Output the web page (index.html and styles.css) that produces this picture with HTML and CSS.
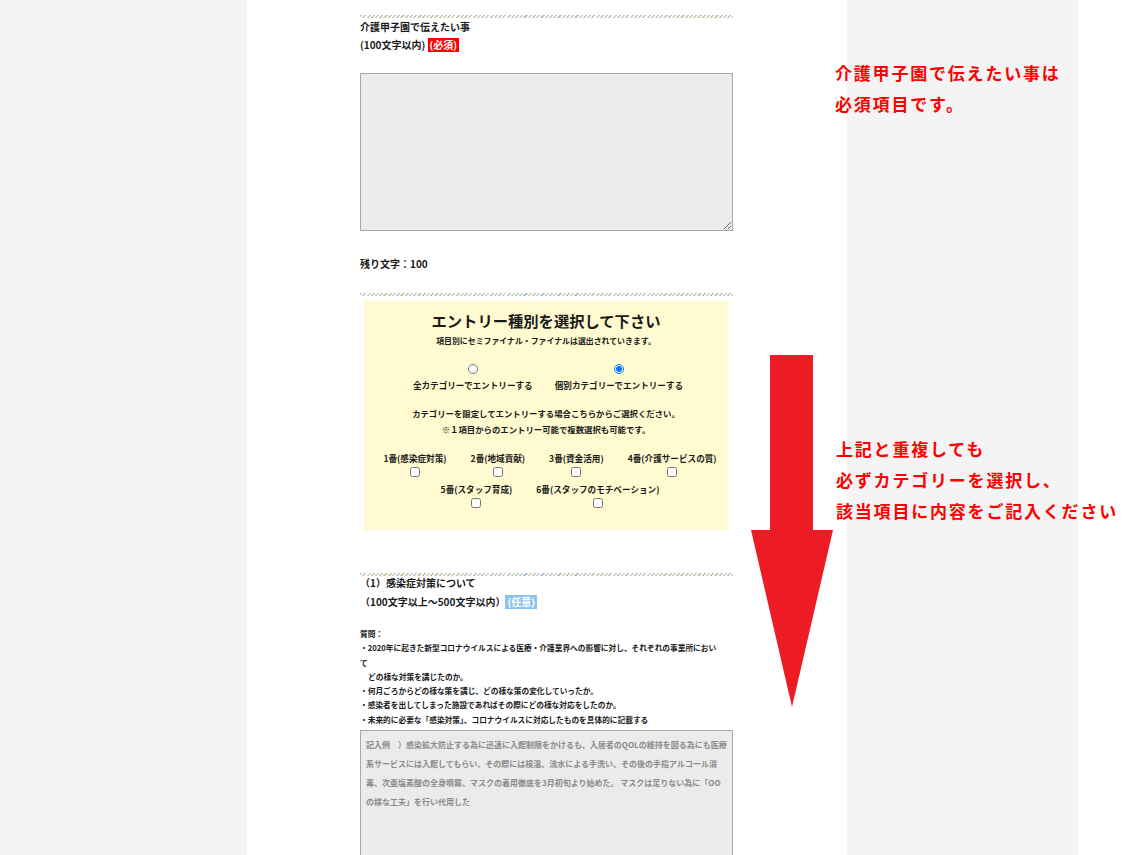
FILE: index.html
```html
<!DOCTYPE html>
<html lang="ja">
<head>
  <meta charset="UTF-8" />
  <title>エントリーフォーム</title>
  <link rel="stylesheet" href="styles.css">
</head>
<body>

  <div class="page">
    <div class="gutter"></div>

    <main class="form">
      <section class="field">
        <div class="stripe"></div>
        <p class="field-title">介護甲子園で伝えたい事</p>
        <p class="field-sub">(100文字以内) <span class="badge badge-required">(必須)</span></p>
        <textarea class="box-input message"></textarea>
        <p class="counter">残り文字：100</p>
      </section>

      <div class="stripe stripe-gap"></div>
      <section class="entry">
        <h2>エントリー種別を選択して下さい</h2>
        <p class="entry-note">項目別にセミファイナル・ファイナルは選出されていきます。</p>

        <div class="radio-row">
          <label class="choice">
            <input type="radio" name="entry">
            <span>全カテゴリーでエントリーする</span>
          </label>
          <label class="choice">
            <input type="radio" name="entry" checked>
            <span>個別カテゴリーでエントリーする</span>
          </label>
        </div>

        <p class="entry-text">カテゴリーを限定してエントリーする場合こちらからご選択ください。<br>※１項目からのエントリー可能で複数選択も可能です。</p>

        <div class="check-row">
          <label class="choice"><span>1番(感染症対策)</span><input type="checkbox"></label>
          <label class="choice"><span>2番(地域貢献)</span><input type="checkbox"></label>
          <label class="choice"><span>3番(資金活用)</span><input type="checkbox"></label>
          <label class="choice"><span>4番(介護サービスの質)</span><input type="checkbox"></label>
        </div>
        <div class="check-row row-2">
          <label class="choice"><span>5番(スタッフ育成)</span><input type="checkbox"></label>
          <label class="choice"><span>6番(スタッフのモチベーション)</span><input type="checkbox"></label>
        </div>
      </section>

      <section class="field field-q">
        <div class="stripe"></div>
        <p class="field-title">（1）感染症対策について</p>
        <p class="field-sub sub-q">（100文字以上～500文字以内）<span class="badge badge-optional">(任意)</span></p>

        <div class="question">
          <p>質問：</p>
          <p>・2020年に起きた新型コロナウイルスによる医療・介護業界への影響に対し、それぞれの事業所において</p>
          <p class="indent">どの様な対策を講じたのか。</p>
          <p>・何月ごろからどの様な策を講じ、どの様な策の変化していったか。</p>
          <p>・感染者を出してしまった施設であればその際にどの様な対応をしたのか。</p>
          <p>・未来的に必要な「感染対策」、コロナウイルスに対応したものを具体的に記載する</p>
        </div>
        <textarea class="box-input answer" placeholder="記入例　）感染拡大防止する為に迅速に入館制限をかけるも、入居者のQOLの維持を図る為にも医療系サービスには入館してもらい、その際には検温、流水による手洗い、その後の手指アルコール消毒、次亜塩素酸の全身噴霧、マスクの着用徹底を3月初旬より始めた。 マスクは足りない為に「OOの様な工夫」を行い代用した"></textarea>
      </section>
    </main>

    <div class="aside"></div>
  </div>

  <!-- notes drawn on top of the form -->
  <p class="note note-top">介護甲子園で伝えたい事は<br>必須項目です。</p>

  <svg class="arrow" width="82" height="352" viewBox="0 0 82 352">
    <polygon points="19,0 62,0 62,175 82,175 41,352 0,175 19,175" fill="#ed1c24" />
  </svg>

  <p class="note note-mid">上記と重複しても<br>必ずカテゴリーを選択し、<br>該当項目に内容をご記入ください</p>

</body>
</html>
```

FILE: styles.css
```css
:root {
  --side: #f4f4f4;
  --text: #1a1a1a;
  --yellow: #fffad0;
  --red: #ff0000;
}

* {
  box-sizing: border-box;
}

body {
  margin: 0;
  background: #fff;
  font-family: "Noto Sans CJK JP", sans-serif;
  color: var(--text);
  height: 855px;
  overflow: hidden;
}

p {
  margin: 0;
}

.page {
  display: flex;
  min-height: 855px;
}

.gutter {
  width: 247px;
  background: var(--side);
}

.aside {
  width: 231px;
  background: var(--side);
}

.form {
  width: 600px;
  background: #fff;
  padding: 15px 0 0 113px;
}

.form > * {
  width: 373px;
}

/* striped divider between fields */
.stripe {
  height: 3px;
  background: repeating-linear-gradient(-45deg, #d9cc9e 0 1.5px, #fff 1.5px 3px, #a4c9d2 3px 4.5px, #fff 4.5px 6px);
}

.stripe-gap {
  margin-top: 21px;
}

.field-title {
  font-size: 10px;
  font-weight: 700;
  line-height: 17px;
}

.field-sub {
  font-size: 10px;
  font-weight: 700;
  line-height: 19px;
}

.badge {
  display: inline-block;
  color: #fff;
  padding: 0 2px;
  line-height: 14px;
}

.badge-required {
  background: #f00;
}

.badge-optional {
  background: #8ec4ec;
}

.box-input {
  display: block;
  width: 373px;
  margin: 0;
  background: #ebebeb;
  border: 1px solid #a9a9a9;
  font-family: inherit;
}

.message {
  height: 158px;
  margin-top: 19px;
}

.counter {
  font-size: 10px;
  font-weight: 700;
  line-height: 16px;
  margin-top: 25px;
}

/* entry type box */
.entry {
  margin: 5px 0 0 4px;
  width: 364px !important;
  height: 229px;
  background: var(--yellow);
  padding-top: 8px;
  text-align: center;
  font-weight: 700;
}

.entry h2 {
  margin: 0;
  font-size: 15.3px;
  font-weight: 600;
  line-height: 22px;
}

.entry-note {
  font-size: 7.9px;
  line-height: 14px;
  margin-top: 3px;
}

.radio-row {
  display: flex;
  justify-content: center;
  gap: 22px;
  margin-top: 16px;
  padding-left: 4px;
}

.choice {
  display: flex;
  flex-direction: column;
  align-items: center;
  font-size: 8.6px;
  line-height: 14px;
}

.radio-row input {
  width: 10px;
  height: 10px;
  margin: 0 0 4px;
}

.entry-text {
  font-size: 8.4px;
  line-height: 16px;
  margin-top: 13px;
}

.check-row {
  display: flex;
  justify-content: center;
  gap: 24px;
  margin-top: 14px;
  padding-left: 8px;
}

.check-row.row-2 {
  margin-top: 5px;
}

.check-row input {
  width: 10px;
  height: 10px;
  margin: 2px 0 0;
}

/* question block */
.field-q {
  margin-top: 43px;
}

.field-q .field-title {
  line-height: 14px;
}

.sub-q {
  margin-top: 2px;
  line-height: 20px;
}

.question {
  margin-top: 15px;
  width: 362px;
  font-size: 7.7px;
  font-weight: 700;
  line-height: 14.3px;
}

.question .indent {
  padding-left: 8px;
}

.answer {
  height: 200px;
  margin-top: 3px;
  padding: 4px 5px;
  font-size: 8px;
  font-weight: 700;
  line-height: 19px;
  resize: vertical;
}

.answer::placeholder {
  color: #8a8a8a;
}

/* red notes over the page */
.note {
  position: absolute;
  margin: 0;
  color: var(--red);
  font-size: 17px;
  font-weight: 700;
  letter-spacing: 1.8px;
  line-height: 31px;
  white-space: nowrap;
}

.note-top {
  left: 835px;
  top: 57px;
}

.note-mid {
  left: 836px;
  top: 433px;
}

.arrow {
  position: absolute;
  left: 751px;
  top: 355px;
}
```
